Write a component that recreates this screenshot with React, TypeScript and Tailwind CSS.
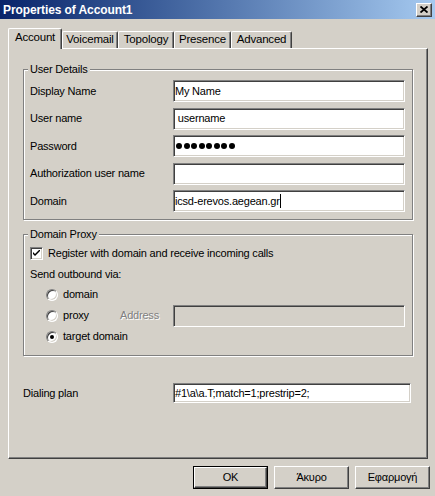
import React from 'react';

const sunken =
  'border border-t-[#808080] border-l-[#808080] border-r-white border-b-white shadow-[inset_1px_1px_0_#404040,inset_-1px_-1px_0_#d4d0c8]';
const raised =
  'border border-t-white border-l-white border-r-[#404040] border-b-[#404040] shadow-[inset_-1px_-1px_0_#808080]';
const etched = 'border border-[#808080] shadow-[inset_1px_1px_0_#fff,1px_1px_0_#fff]';

const tabs = [
  { label: 'Account', cls: 'w-[54px]', active: true },
  { label: 'Voicemail', cls: 'w-[56px]', active: false },
  { label: 'Topology', cls: 'w-[56px]', active: false },
  { label: 'Presence', cls: 'w-[57px]', active: false },
  { label: 'Advanced', cls: 'w-[61px]', active: false },
];

const GroupBox: React.FC<{ title: string; className?: string; children: React.ReactNode }> = ({
  title,
  className = '',
  children,
}) => (
  <div className={`relative ${etched} ${className}`}>
    <span className="absolute -top-[8px] left-[4px] px-[2px] bg-[#d4d0c8] leading-[14px]">{title}</span>
    {children}
  </div>
);

const Field: React.FC<{ className?: string; disabled?: boolean; children?: React.ReactNode }> = ({
  className = 'w-[232px] h-[22px]',
  disabled,
  children,
}) => (
  <div
    className={`${sunken} ${className} ${disabled ? 'bg-[#d4d0c8]' : 'bg-white'} flex items-center pl-[1px] whitespace-pre`}
  >
    {children}
  </div>
);

const Radio: React.FC<{ checked?: boolean }> = ({ checked }) => (
  <div className="w-[12px] h-[12px] rounded-full bg-white border border-t-[#808080] border-l-[#808080] border-r-white border-b-white shadow-[inset_1px_1px_0_#404040,inset_-1px_-1px_0_#d4d0c8] flex items-center justify-center">
    {checked && <div className="w-[4px] h-[4px] rounded-full bg-black" />}
  </div>
);

const Button: React.FC<{ label: string; isDefault?: boolean }> = ({ label, isDefault }) => (
  <div className={`w-[75px] h-[23px] ${isDefault ? 'border border-black' : ''}`}>
    <div className={`w-full h-full ${raised} flex items-center justify-center`}>{label}</div>
  </div>
);

// password mask, 8 dots
const PasswordDots = () => (
  <div className="flex items-center gap-[1.5px] pl-[1px]">
    {Array.from({ length: 8 }).map((_, i) => (
      <span key={i} className="w-[6px] h-[6px] rounded-full bg-black" />
    ))}
  </div>
);

const details: { label: string; value: React.ReactNode }[] = [
  { label: 'Display Name', value: 'My Name' },
  { label: 'User name', value: ' username' },
  { label: 'Password', value: <PasswordDots /> },
  { label: 'Authorization user name', value: '' },
  {
    label: 'Domain',
    value: (
      <>
        icsd-erevos.aegean.gr
        <span className="inline-block w-px h-[14px] bg-black" />
      </>
    ),
  },
];

export default function App() {
  return (
    <div className="w-[435px] h-[496px] bg-[#d4d0c8] flex flex-col font-['Liberation_Sans',Arial,sans-serif] text-[11px] tracking-[-0.2px] text-black overflow-hidden">
      {/* title bar */}
      <div className="h-[19px] shrink-0 flex items-center justify-between pl-[3px] pr-[3px] bg-gradient-to-r from-[#0a246a] to-[#a6caf0]">
        <span className="text-white font-bold text-[12px] tracking-[-0.1px]">Properties of Account1</span>
        <div className={`w-[16px] h-[14px] bg-[#d4d0c8] ${raised} flex items-center justify-center`}>
          <svg width="8" height="7" viewBox="0 0 8 7">
            <path d="M0.5 0.5 L7.5 6.5 M7.5 0.5 L0.5 6.5" stroke="#000" strokeWidth="1.8" />
          </svg>
        </div>
      </div>

      {/* tabs */}
      <div className="mt-[9px] ml-[8px] h-[20px] flex items-end">
        {tabs.map((t) =>
          t.active ? (
            <div
              key={t.label}
              className={`${t.cls} h-[21px] -mb-px relative z-10 bg-[#d4d0c8] border-t border-l border-t-white border-l-white border-r border-r-[#404040] shadow-[inset_-1px_0_0_#808080] rounded-t-[2px] flex items-center justify-center pb-[3px] text-[11.5px]`}
            >
              {t.label}
            </div>
          ) : (
            <div
              key={t.label}
              className={`${t.cls} h-[17px] border-t border-l border-t-white border-l-white border-r border-r-[#404040] shadow-[inset_-1px_0_0_#808080] rounded-t-[2px] flex items-center justify-center text-[11.5px]`}
            >
              {t.label}
            </div>
          )
        )}
      </div>

      {/* tab panel */}
      <div className={`ml-[8px] w-[420px] h-[411px] shrink-0 ${raised} flex flex-col pt-[20px] px-[14px]`}>
        <GroupBox title="User Details" className="pt-[10px] pb-[7px] pl-[6px]">
          <div className="grid grid-cols-[143px_232px] gap-y-[5.5px]">
            {details.map((d) => (
              <React.Fragment key={d.label}>
                <div className="h-[22px] flex items-center">{d.label}</div>
                <Field>{d.value}</Field>
              </React.Fragment>
            ))}
          </div>
        </GroupBox>

        <GroupBox title="Domain Proxy" className="mt-[14px] pt-[12px] pb-[8px] pl-[6px]">
          <div className="h-[13px] flex items-center gap-[5px]">
            <div className={`w-[13px] h-[13px] bg-white ${sunken} flex items-center justify-center`}>
              <svg width="7" height="7" viewBox="0 0 7 7">
                <path d="M0 2 L0 4 L2 6 L7 1 L7 -1 L2 4 Z" fill="#000" />
              </svg>
            </div>
            <span>Register with domain and receive incoming calls</span>
          </div>
          <div className="mt-[8px] h-[13px] flex items-center">Send outbound via:</div>
          <div className="mt-[3px] flex flex-col">
            <div className="h-[21px] flex items-center pl-[16px] gap-[5px]">
              <Radio />
              <span>domain</span>
            </div>
            <div className="h-[21px] flex items-center pl-[16px]">
              <div className="w-[74px] flex items-center gap-[5px]">
                <Radio />
                <span>proxy</span>
              </div>
              <span className="w-[53px] text-[#808080] [text-shadow:1px_1px_0_#fff]">Address</span>
              <Field disabled />
            </div>
            <div className="h-[21px] flex items-center pl-[16px] gap-[5px]">
              <Radio checked />
              <span>target domain</span>
            </div>
          </div>
        </GroupBox>

        <div className="mt-[27px] flex items-center">
          <span className="w-[150px]">Dialing plan</span>
          <Field className="w-[238px] h-[20px]">#1\a\a.T;match=1;prestrip=2;</Field>
        </div>
      </div>

      {/* buttons */}
      <div className="mt-[7px] flex justify-end gap-[6px] pr-[5px]">
        <Button label="OK" isDefault />
        <Button label="Άκυρο" />
        <Button label="Εφαρμογή" />
      </div>
    </div>
  );
}
